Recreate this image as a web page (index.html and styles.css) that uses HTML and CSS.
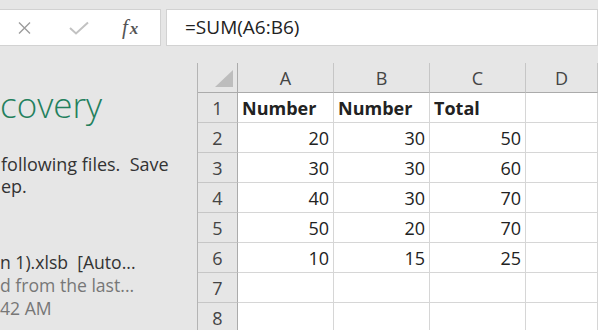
FILE: index.html
```html
<!DOCTYPE html>
<html lang="en">
<head>
    <meta charset="UTF-8">
    <meta name="viewport" content="width=device-width, initial-scale=1.0">
    <title>Sheet - Document Recovery</title>
    <link rel="stylesheet" href="styles.css">
</head>
<body>
    <div class="excel">
        <div class="formula-bar">
            <div class="fx-tools">
                <svg class="tool cancel" width="15" height="14" viewBox="0 0 15 14">
                    <path d="M2 1.5 L13 12.5 M13 1.5 L2 12.5" />
                </svg>
                <svg class="tool enter" width="22" height="14" viewBox="0 0 22 14">
                    <path d="M2 7 L8 12.5 L20 1.5" />
                </svg>
                <span class="tool fx">f<span class="fx-x">x</span></span>
            </div>
            <div class="formula-input">=SUM(A6:B6)</div>
        </div>

        <div class="workspace">
            <aside class="recovery">
                <h2 class="recovery-title">covery</h2>
                <p class="recovery-note">following files.&nbsp; Save<br>ep.</p>
                <div class="recovery-file">
                    <div class="file-name">n 1).xlsb&nbsp; [Auto...</div>
                    <div class="file-meta">d from the last...</div>
                    <div class="file-meta">42 AM</div>
                </div>
            </aside>

            <div class="sheet">
                <div class="grid">
                    <div class="corner"><svg width="18" height="17" viewBox="0 0 18 17"><polygon points="18,0 18,17 0,17" /></svg></div>
                    <div class="col-head">A</div>
                    <div class="col-head">B</div>
                    <div class="col-head">C</div>
                    <div class="col-head">D</div>

                    <div class="row-head">1</div>
                    <div class="cell bold">Number</div>
                    <div class="cell bold">Number</div>
                    <div class="cell bold">Total</div>
                    <div class="cell"></div>

                    <div class="row-head">2</div>
                    <div class="cell num">20</div>
                    <div class="cell num">30</div>
                    <div class="cell num">50</div>
                    <div class="cell"></div>

                    <div class="row-head">3</div>
                    <div class="cell num">30</div>
                    <div class="cell num">30</div>
                    <div class="cell num">60</div>
                    <div class="cell"></div>

                    <div class="row-head">4</div>
                    <div class="cell num">40</div>
                    <div class="cell num">30</div>
                    <div class="cell num">70</div>
                    <div class="cell"></div>

                    <div class="row-head">5</div>
                    <div class="cell num">50</div>
                    <div class="cell num">20</div>
                    <div class="cell num">70</div>
                    <div class="cell"></div>

                    <div class="row-head">6</div>
                    <div class="cell num">10</div>
                    <div class="cell num">15</div>
                    <div class="cell num">25</div>
                    <div class="cell"></div>

                    <div class="row-head">7</div>
                    <div class="cell"></div>
                    <div class="cell"></div>
                    <div class="cell"></div>
                    <div class="cell"></div>

                    <div class="row-head">8</div>
                    <div class="cell"></div>
                    <div class="cell"></div>
                    <div class="cell"></div>
                    <div class="cell"></div>
                </div>
            </div>
        </div>
    </div>
</body>
</html>
```

FILE: styles.css
```css
body {
    margin: 0;
    background: #fff;
    font-family: "Open Sans", "Noto Sans", sans-serif;
    color: #222;
}
.excel {
    width: 598px;
    height: 330px;
    background: #e6e6e6;
    overflow: hidden;
    display: flex;
    flex-direction: column;
}

/* formula bar */
.formula-bar {
    display: flex;
    height: 47px;
    padding-top: 9px;
    box-sizing: border-box;
}
.fx-tools {
    width: 161px;
    height: 37px;
    box-sizing: border-box;
    background: #fff;
    border: 1px solid #d2d2d2;
    border-left: none;
    display: flex;
    align-items: center;
    padding-left: 17px;
}
.tool {
    flex: none;
}
.cancel path {
    fill: none;
    stroke: #9c9c9c;
    stroke-width: 1.4;
}
.enter {
    margin-left: 36px;
}
.enter path {
    fill: none;
    stroke: #c2c2c2;
    stroke-width: 2;
}
.fx {
    margin-left: 32px;
    font-family: "Liberation Serif", serif;
    font-style: italic;
    font-size: 21px;
    color: #555;
    line-height: 1;
}
.fx-x {
    font-size: 17px;
    font-weight: bold;
    margin-left: 2px;
}
.formula-input {
    flex: 1;
    height: 37px;
    box-sizing: border-box;
    margin-left: 5px;
    background: #fff;
    border: 1px solid #d2d2d2;
    padding-left: 18px;
    font-size: 19px;
    line-height: 34px;
    color: #222;
}

/* recovery pane + sheet */
.workspace {
    flex: 1;
    display: flex;
    min-height: 0;
}
.recovery {
    width: 197px;
    flex: none;
    overflow: hidden;
    white-space: nowrap;
}
.recovery-title {
    margin: 40px 0 0 0;
    font-size: 35px;
    font-weight: 300;
    line-height: 36px;
    color: #23805d;
}
.recovery-note {
    margin: 30px 0 0 1px;
    font-size: 18px;
    line-height: 22px;
    color: #333;
}
.recovery-file {
    margin-top: 54px;
    font-size: 17.6px;
    line-height: 23px;
}
.file-name {
    color: #333;
}
.file-meta {
    color: #777;
}

.sheet {
    flex: 1;
    margin-top: 16px;
    border-left: 1px solid #b4b4b4;
    background: #fff;
    overflow: hidden;
}
.grid {
    display: grid;
    grid-template-columns: 40px 96px 96px 96px 1fr;
    grid-auto-rows: 30px;
    font-size: 18px;
    line-height: 30px;
}
.grid > div {
    box-sizing: border-box;
    border-right: 1px solid #d6d6d6;
    border-bottom: 1px solid #d6d6d6;
    padding: 0 4px;
    white-space: nowrap;
    overflow: hidden;
}
.grid > .corner,
.grid > .col-head,
.grid > .row-head {
    background: #e6e6e6;
    color: #444;
    text-align: center;
    border-color: #c6c6c6;
}
.grid > .corner {
    border-right-color: #ababab;
    border-bottom-color: #ababab;
    display: flex;
    justify-content: flex-end;
    align-items: flex-end;
    padding: 0 4px 5px 0;
}
.corner polygon {
    fill: #bdbdbd;
}
.grid > .col-head {
    border-bottom-color: #ababab;
}
.grid > .row-head {
    border-right-color: #ababab;
}
.cell.num {
    text-align: right;
}
.cell.bold {
    font-weight: 700;
}
```
